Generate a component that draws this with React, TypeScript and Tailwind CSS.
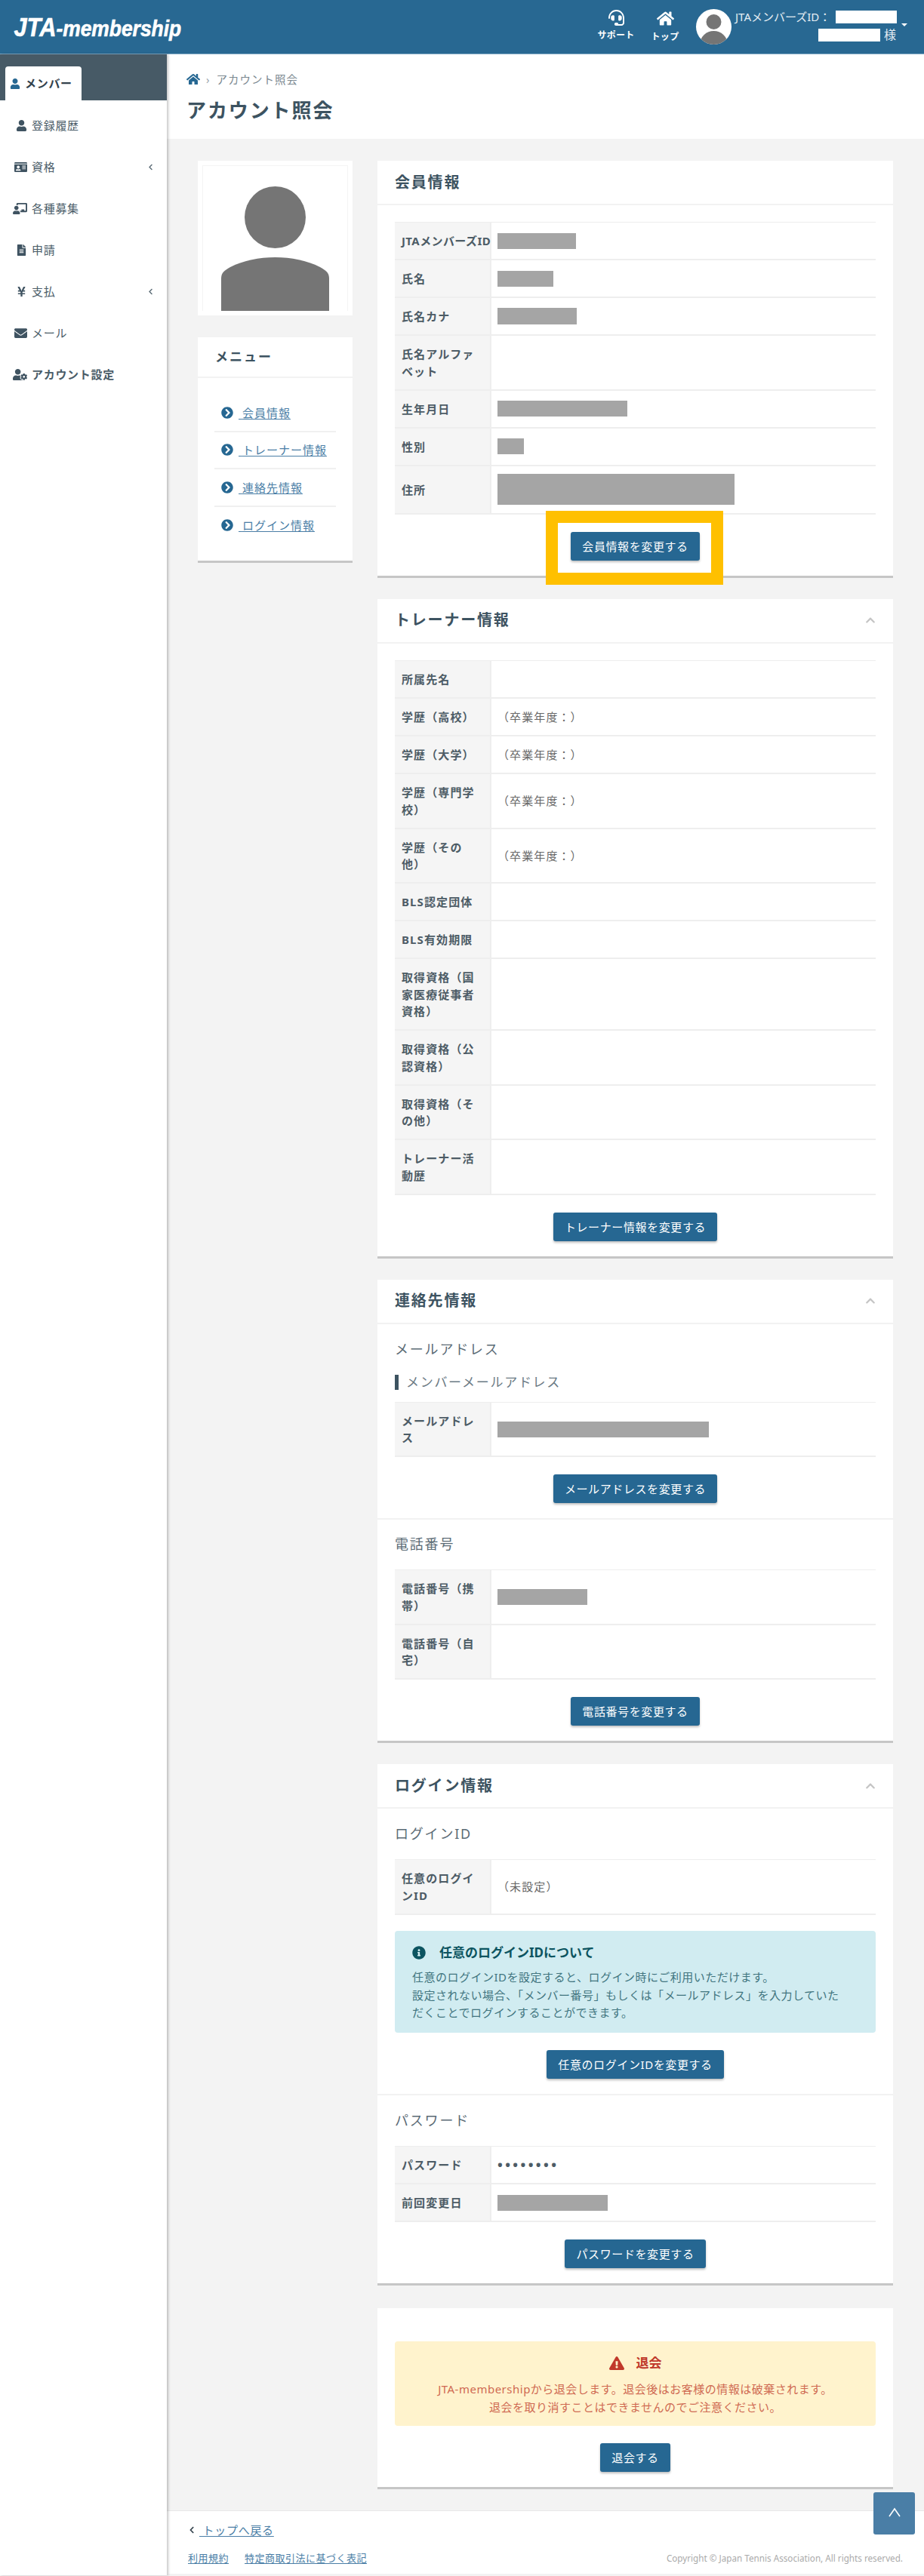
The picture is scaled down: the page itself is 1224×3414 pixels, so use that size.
import type { ReactNode } from 'react'
import {
  FaChalkboardTeacher,
  FaChevronCircleRight,
  FaChevronLeft,
  FaChevronUp,
  FaEnvelope,
  FaExclamationTriangle,
  FaFileAlt,
  FaHeadset,
  FaHome,
  FaIdCard,
  FaInfoCircle,
  FaUser,
  FaUserCog,
  FaYenSign,
} from 'react-icons/fa'

const sideItems = [
  { icon: <FaUser size={15} />, label: '登録履歴' },
  { icon: <FaIdCard size={17} />, label: '資格', more: true },
  { icon: <FaChalkboardTeacher size={19} />, label: '各種募集' },
  { icon: <FaFileAlt size={15} />, label: '申請' },
  { icon: <FaYenSign size={15} />, label: '支払', more: true },
  { icon: <FaEnvelope size={17} />, label: 'メール' },
  { icon: <FaUserCog size={19} />, label: 'アカウント設定', bold: true },
]

function Bar({ w, h = 21 }: { w: number; h?: number }) {
  return <div className="bg-[#a5a5a5]" style={{ width: w, height: h }} />
}

function Row({ label, nowrap, children }: { label: string; nowrap?: boolean; children?: ReactNode }) {
  return (
    <div className="flex border-b-2 border-[#eeeeee]">
      <div className={`flex w-[128px] shrink-0 items-center border-r-2 border-[#eeeeee] bg-[#f5f5f5] py-[12.85px] pl-[9px] pr-[13px] text-[15px] font-bold leading-[22.4px] text-[#4d5c66] ${nowrap ? 'tracking-[0.4px] whitespace-nowrap' : 'tracking-[1.1px]'}`}>
        {label}
      </div>
      <div className="flex flex-1 items-center py-[10.5px] pl-[8px] text-[15px] leading-[22.4px] tracking-[1.1px] text-[#666666]">
        {children}
      </div>
    </div>
  )
}

function Table({ children }: { children: ReactNode }) {
  return <div className="border-t border-[#eeeeee]">{children}</div>
}

function Btn({ children }: { children: ReactNode }) {
  return (
    <button className="h-[38px] rounded-[3px] bg-[#266792] px-[15px] text-[15px] tracking-[0.6px] whitespace-nowrap text-white shadow-[0_2px_3px_rgba(0,0,0,0.25)]">
      {children}
    </button>
  )
}

function Card({ title, fold, children }: { title: string; fold?: boolean; children: ReactNode }) {
  return (
    <section className="border-b-[3px] border-[#c6c6c6] bg-white">
      <div className="flex h-[59px] items-center justify-between border-b-2 border-[#f2f2f2] px-[23px]">
        <h2 className="text-[20px] font-bold tracking-[1.8px] text-[#3d5361]">{title}</h2>
        {fold && <FaChevronUp size={14} className="text-[#c4c4c4]" />}
      </div>
      {children}
    </section>
  )
}

function Heading({ children }: { children: ReactNode }) {
  return <h3 className="mb-[19px] text-[18px] leading-[29px] tracking-[1.8px] text-[#5b6b75]">{children}</h3>
}

function Actions({ children }: { children: ReactNode }) {
  return <div className="flex justify-center pt-[23px] pb-[20px]">{children}</div>
}

function Sidebar() {
  return (
    <aside className="relative z-10 w-[221px] shrink-0 bg-white shadow-[2px_0_3px_rgba(0,0,0,0.22)]">
      <div className="flex h-[61px] items-end bg-[#475a66] pl-[7px]">
        <div className="flex h-[45px] w-[101px] items-center gap-[6px] rounded-t-[4px] bg-white pl-[6px] text-[15px] font-bold tracking-[0.7px] text-[#33424c]">
          <FaUser size={14} className="text-[#266792]" />
          メンバー
        </div>
      </div>
      <nav className="pt-[6px]">
        {sideItems.map(item => (
          <div key={item.label} className="flex h-[55px] items-center text-[#4a5c68]">
            <span className="flex w-[42px] justify-end pr-[6px] text-[#3f5361]">{item.icon}</span>
            <span className={`flex-1 text-[15px] tracking-[0.7px] ${item.bold ? 'font-bold' : ''}`}>{item.label}</span>
            {item.more && <FaChevronLeft size={9} className="mr-[17px] text-[#5b6b75]" />}
          </div>
        ))}
      </nav>
    </aside>
  )
}

function Header() {
  return (
    <header className="flex h-[72px] items-start justify-between border-b border-[#7fa8c4] bg-[#286892]">
      <div className="origin-left scale-x-[0.88] whitespace-nowrap pt-[18px] pl-[21px] font-['Liberation_Sans',sans-serif] text-[30px] leading-[36px] font-bold italic text-white [-webkit-text-stroke:0.6px_white]">
        <span className="text-[35px]">JTA</span>-membership
      </div>
      <div className="flex items-start pr-[36px] text-white">
        <div className="mt-[13px] flex w-[60px] flex-col items-center gap-[5px] text-[12px] leading-[16px] font-bold tracking-[0.3px]">
          <FaHeadset size={21} />
          サポート
        </div>
        <div className="mt-[13px] ml-[5px] flex w-[60px] flex-col items-center gap-[5px] text-[12px] leading-[16px] font-bold tracking-[0.3px]">
          <FaHome size={23} />
          トップ
        </div>
        <div className="mt-[12px] ml-[11px] h-[47px] w-[47px] overflow-hidden rounded-full bg-white">
          <svg viewBox="0 0 47 47" className="h-full w-full">
            <circle cx="23.5" cy="17" r="10" fill="#757575" />
            <ellipse cx="23.5" cy="46" rx="18" ry="17" fill="#757575" />
          </svg>
        </div>
        <div className="ml-[5px] w-[214px] pt-[14px] text-[15px] leading-[17px] text-[#e4edf3]">
          <div className="flex items-center">
            <span className="w-[133px] whitespace-nowrap">JTAメンバーズID：</span>
            <span className="h-[17px] w-[81px] bg-white" />
          </div>
          <div className="mt-[7px] flex items-center pl-[110px] text-[16px]">
            <span className="h-[17px] w-[82px] bg-white" />
            <span className="ml-[5px]">様</span>
          </div>
          <span className="absolute top-[31px] right-[22px] h-0 w-0 border-x-[4px] border-t-[4px] border-x-transparent border-t-white" />
        </div>
      </div>
    </header>
  )
}

function LeftColumn() {
  const links = ['会員情報', 'トレーナー情報', '連絡先情報', 'ログイン情報']
  return (
    <div className="w-[205px] shrink-0">
      <div className="bg-white p-[6px]">
        <div className="h-[193px] border-x border-t border-[#f4f4f4] px-[24px] pt-[27px]">
          <svg viewBox="0 0 143 165" className="h-[165px] w-[143px]">
            <ellipse cx="71.5" cy="41" rx="40.5" ry="41" fill="#757575" />
            <path d="M0 165V122C0 114 5 111 12 107C30 98 50 94 71.5 94C93 94 113 98 131 107C138 111 143 114 143 122V165Z" fill="#757575" />
          </svg>
        </div>
      </div>
      <div className="mt-[29px] border-b-[3px] border-[#c6c6c6] bg-white">
        <div className="flex h-[54px] items-center border-b-2 border-[#f2f2f2] pl-[23px] text-[17px] font-bold tracking-[2px] text-[#3d5361]">
          メニュー
        </div>
        <div className="px-[22px] pt-[22px] pb-[22px]">
          {links.map((l, i) => (
            <div key={l} className={`flex h-[49.500px] items-center pl-[9px] ${i < 3 ? 'border-b-2 border-[#f0f0f0]' : ''}`}>
              <FaChevronCircleRight size={16} className="shrink-0 text-[#266792]" />
              <a className="ml-[7px] text-[15px] tracking-[1px] whitespace-nowrap text-[#4a7ea6] underline underline-offset-2">&nbsp;{l}</a>
            </div>
          ))}
        </div>
      </div>
    </div>
  )
}

function Grad() {
  return <>（卒業年度：）</>
}

export default function App() {
  return (
    <div className="relative min-h-[3414px] overflow-hidden bg-[#f3f3f3] font-['Noto_Sans','Noto_Sans_CJK_JP',sans-serif]">
      <Header />
      <div className="flex">
        <Sidebar />
        <main className="flex min-w-0 flex-1 flex-col">
          <div className="h-[112px] bg-white pl-[26px]">
            <div className="flex items-center pt-[22px] text-[14.5px] leading-[22px] tracking-[1px] text-[#7b8890]">
              <FaHome size={18} className="text-[#266792]" />
              <span className="mx-[8px] text-[#9aa5ac]">›</span>
              アカウント照会
            </div>
            <h1 className="mt-[12px] text-[26px] leading-[36px] font-bold tracking-[1.9px] text-[#3d5361]">アカウント照会</h1>
          </div>

          <div className="flex flex-1 gap-[33px] pt-[29px] pr-[41px] pl-[41px]">
            <LeftColumn />
            <div className="flex min-w-0 flex-1 flex-col gap-[28px]">
              <Card title="会員情報">
                <div className="px-[23px] pt-[22px]">
                  <Table>
                    <Row label="JTAメンバーズID" nowrap><Bar w={104} /></Row>
                    <Row label="氏名"><Bar w={74} /></Row>
                    <Row label="氏名カナ"><Bar w={105} h={22} /></Row>
                    <Row label="氏名アルファベット" />
                    <Row label="生年月日"><Bar w={172} /></Row>
                    <Row label="性別"><Bar w={35} /></Row>
                    <Row label="住所"><Bar w={314} h={41} /></Row>
                  </Table>
                  <Actions>
                    <div className="relative">
                      <div className="absolute -top-[28px] -right-[31px] -bottom-[32px] -left-[33px] border-[16px] border-[#ffc000]" />
                      <Btn>会員情報を変更する</Btn>
                    </div>
                  </Actions>
                </div>
              </Card>

              <Card title="トレーナー情報" fold>
                <div className="px-[23px] pt-[22px]">
                  <Table>
                    <Row label="所属先名" />
                    <Row label="学歴（高校）"><Grad /></Row>
                    <Row label="学歴（大学）"><Grad /></Row>
                    <Row label="学歴（専門学校）"><Grad /></Row>
                    <Row label="学歴（その他）"><Grad /></Row>
                    <Row label="BLS認定団体" />
                    <Row label="BLS有効期限" />
                    <Row label="取得資格（国家医療従事者資格）" />
                    <Row label="取得資格（公認資格）" />
                    <Row label="取得資格（その他）" />
                    <Row label="トレーナー活動歴" />
                  </Table>
                  <Actions><Btn>トレーナー情報を変更する</Btn></Actions>
                </div>
              </Card>

              <Card title="連絡先情報" fold>
                <div className="border-b-2 border-[#f2f2f2] px-[23px] pt-[19px]">
                  <Heading>メールアドレス</Heading>
                  <div className="mt-[1px] mb-[16px] flex items-center border-l-[5px] border-[#3d5361] pl-[10px] text-[17px] leading-[20px] tracking-[1.7px] text-[#6b7a84]">
                    メンバーメールアドレス
                  </div>
                  <Table>
                    <Row label="メールアドレス"><Bar w={280} /></Row>
                  </Table>
                  <Actions><Btn>メールアドレスを変更する</Btn></Actions>
                </div>
                <div className="px-[23px] pt-[18px]">
                  <Heading>電話番号</Heading>
                  <Table>
                    <Row label="電話番号（携帯）"><Bar w={119} /></Row>
                    <Row label="電話番号（自宅）" />
                  </Table>
                  <Actions><Btn>電話番号を変更する</Btn></Actions>
                </div>
              </Card>

              <Card title="ログイン情報" fold>
                <div className="border-b-2 border-[#f2f2f2] px-[23px] pt-[19px]">
                  <Heading>ログインID</Heading>
                  <Table>
                    <Row label="任意のログインID">（未設定）</Row>
                  </Table>
                  <div className="mt-[21px] rounded-[4px] bg-[#d1ecf1] px-[23px] pt-[16px] pb-[14px] text-[#0c5460]">
                    <div className="flex h-[26px] items-center text-[17px] font-bold">
                      <FaInfoCircle size={18} className="mr-[18px]" />
                      任意のログインIDについて
                    </div>
                    <p className="mt-[8px] text-[15px] leading-[23.7px] tracking-[0.5px] text-[#41757f]">
                      任意のログインIDを設定すると、ログイン時にご利用いただけます。
                      <br />
                      設定されない場合、「メンバー番号」もしくは「メールアドレス」を入力していた
                      <br />
                      だくことでログインすることができます。
                    </p>
                  </div>
                  <Actions><Btn>任意のログインIDを変更する</Btn></Actions>
                </div>
                <div className="px-[23px] pt-[19px]">
                  <Heading>パスワード</Heading>
                  <Table>
                    <Row label="パスワード"><span className="text-[18px] leading-[22px] font-bold tracking-[3.4px] text-[#4d5c66]">••••••••</span></Row>
                    <Row label="前回変更日"><Bar w={146} /></Row>
                  </Table>
                  <Actions><Btn>パスワードを変更する</Btn></Actions>
                </div>
              </Card>

              <section className="mt-[2px] border-b-[3px] border-[#c6c6c6] bg-white px-[23px] pt-[44px]">
                <div className="h-[112px] rounded-[4px] bg-[#fff3cd] pt-[17px] text-center text-[#c0392b]">
                  <div className="flex h-[24px] items-center justify-center gap-[16px] text-[17px] font-bold">
                    <FaExclamationTriangle size={20} />
                    退会
                  </div>
                  <p className="mt-[10px] text-[15px] leading-[24px] tracking-[0.5px] text-[#cf6a52]">
                    JTA-membershipから退会します。退会後はお客様の情報は破棄されます。
                    <br />
                    退会を取り消すことはできませんのでご注意ください。
                  </p>
                </div>
                <Actions><Btn>退会する</Btn></Actions>
              </section>
            </div>
          </div>

          <footer className="mt-[28px] mb-[2px] flex h-[84px] items-end justify-between border-t border-[#e8e8e8] bg-white px-[28px] pb-[12px]">
            <div>
              <div className="mb-[17px] flex items-center gap-[5px] text-[15px] leading-[22px] tracking-[0.7px]">
                <FaChevronLeft size={10} className="text-[#33424c]" />
                <a className="text-[#4a7ea6] underline underline-offset-2">&nbsp;トップへ戻る</a>
              </div>
              <div className="flex gap-[21px] text-[13px] leading-[18px] tracking-[0.5px]">
                <a className="text-[#4a7ea6] underline underline-offset-2">利用規約</a>
                <a className="text-[#4a7ea6] underline underline-offset-2">特定商取引法に基づく表記</a>
              </div>
            </div>
            <div className="text-[11.7px] leading-[18px] text-[#aaaaaa]">
              Copyright © Japan Tennis Association, All rights reserved.
            </div>
          </footer>
        </main>
      </div>
      <button className="absolute top-[3303px] left-[1157px] z-20 flex h-[56px] w-[55px] items-center justify-center rounded-[3px] bg-[#4a7ea6] text-white">
        <svg viewBox="0 0 24 24" className="h-[24px] w-[24px]" fill="none" stroke="currentColor" strokeWidth="1.6">
          <path d="M5 16L12 6L19 16" />
        </svg>
      </button>
    </div>
  )
}
